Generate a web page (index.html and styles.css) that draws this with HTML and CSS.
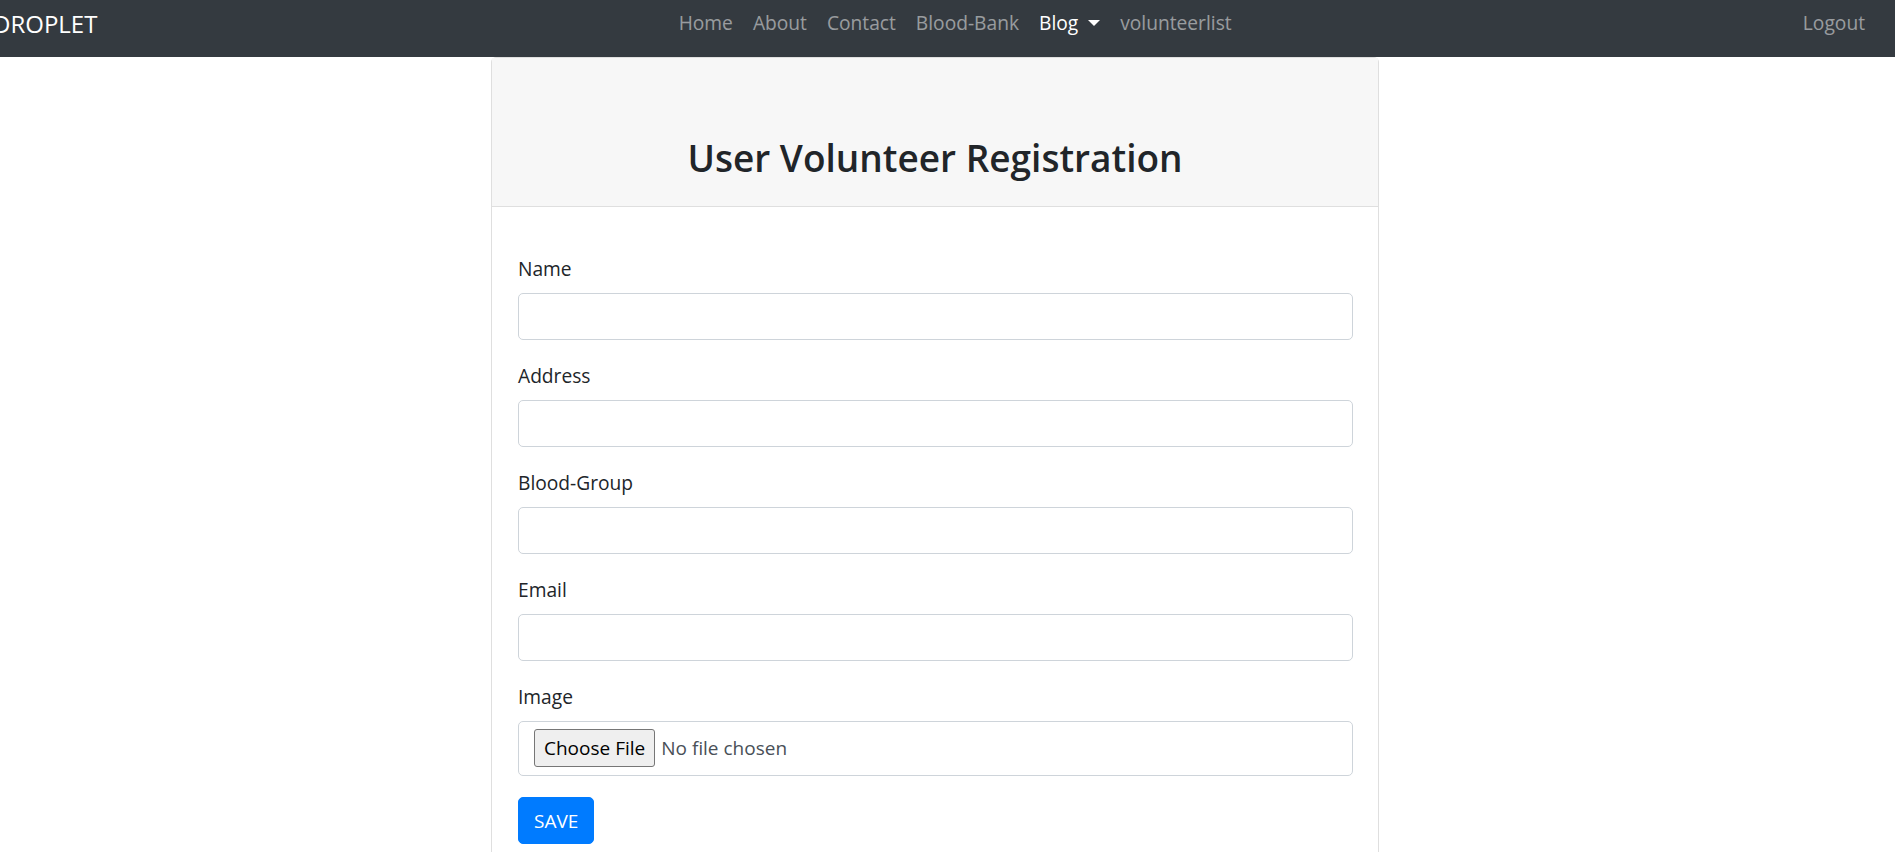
FILE: index.html
```
<!DOCTYPE html>
<html lang="en">
<head>
<meta charset="utf-8">
<title>User Volunteer Registration</title>
<link rel="stylesheet" href="styles.css">
</head>
<body>
<nav class="navbar">
  <a class="brand" href="#">DROPLET</a>
  <ul class="nav-main">
    <li><a class="nav-link" href="#">Home</a></li>
    <li><a class="nav-link" href="#">About</a></li>
    <li><a class="nav-link" href="#">Contact</a></li>
    <li><a class="nav-link" href="#">Blood-Bank</a></li>
    <li><a class="nav-link active dropdown" href="#">Blog<span class="caret"></span></a></li>
    <li><a class="nav-link" href="#">volunteerlist</a></li>
  </ul>
  <ul class="nav-right">
    <li><a class="nav-link" href="#">Logout</a></li>
  </ul>
</nav>
<main class="page">
  <div class="card">
    <div class="card-header">
      <h2 class="title">User Volunteer Registration</h2>
    </div>
    <div class="card-body">
      <form class="form">
        <div class="group">
          <label class="label" for="name">Name</label>
          <input class="control" id="name" type="text">
        </div>
        <div class="group">
          <label class="label" for="address">Address</label>
          <input class="control" id="address" type="text">
        </div>
        <div class="group">
          <label class="label" for="blood">Blood-Group</label>
          <input class="control" id="blood" type="text">
        </div>
        <div class="group">
          <label class="label" for="email">Email</label>
          <input class="control" id="email" type="email">
        </div>
        <div class="group">
          <label class="label" for="image">Image</label>
          <input class="control file" id="image" type="file">
        </div>
        <button class="btn-save" type="submit">SAVE</button>
      </form>
    </div>
  </div>
</main>
</body>
</html>
```
FILE: styles.css
```
* { box-sizing: border-box; }

html, body {
  margin: 0;
  padding: 0;
}

body {
  font-family: "Open Sans", "Noto Sans", "Liberation Sans", sans-serif;
  font-size: 19.2px;
  line-height: 30px;
  color: #212529;
  background: #fff;
}

.navbar {
  display: flex;
  align-items: flex-start;
  height: 57px;
  padding: 0 20px;
  background: #343a40;
}

.brand {
  display: block;
  margin-left: -27px;
  margin-right: 20px;
  padding-top: 6px;
  font-size: 24px;
  line-height: 36px;
  color: #fff;
  text-decoration: none;
  white-space: nowrap;
}

.nav-main, .nav-right {
  display: flex;
  list-style: none;
  margin: 0;
  padding: 0;
}

.nav-main {
  margin: 0 auto;
}

.nav-link {
  display: block;
  padding: 8px 10px;
  font-size: 19.2px;
  line-height: 30px;
  color: rgba(255, 255, 255, 0.5);
  text-decoration: none;
  white-space: nowrap;
}

.nav-link.active {
  color: #fff;
}

.caret {
  display: inline-block;
  margin-left: 10px;
  vertical-align: 4px;
  border-top: 6px solid #fff;
  border-left: 6px solid transparent;
  border-right: 6px solid transparent;
}

.page {
  display: flex;
  justify-content: center;
  padding-right: 25px;
}

.card {
  width: 888px;
  border: 1px solid #dfdfdf;
  border-radius: 5px 5px 0 0;
  background: #fff;
}

.card-header {
  padding: 76px 25px 14px;
  background: #f7f7f7;
  border-bottom: 1px solid #dfdfdf;
  text-align: center;
}

.title {
  margin: 0 0 10px;
  font-size: 37px;
  font-weight: 600;
  line-height: 48px;
  color: #212529;
}

.card-body {
  padding: 47px 25px 25px 26px;
}

.group {
  margin-bottom: 21px;
}

.label {
  display: block;
  margin-bottom: 9px;
  line-height: 30px;
}

.control {
  display: block;
  width: 100%;
  height: 47px;
  padding: 7px 15px;
  font: inherit;
  color: #495057;
  background: #fff;
  border: 1px solid #ced4da;
  border-radius: 5px;
}

.control.file {
  height: 55px;
  padding: 7px 15px;
  font-size: 19px;
}

.control.file::file-selector-button {
  height: 38px;
  margin-right: 6px;
  padding: 0 9px;
  font: inherit;
  font-size: 19px;
  color: #000;
  background: #efefef;
  border: 1px solid #767676;
  border-radius: 3px;
}

.btn-save {
  display: block;
  height: 47px;
  padding: 0 15px;
  font: inherit;
  font-size: 19px;
  color: #fff;
  background: #007bff;
  border: 1px solid #007bff;
  border-radius: 5px;
}
```
